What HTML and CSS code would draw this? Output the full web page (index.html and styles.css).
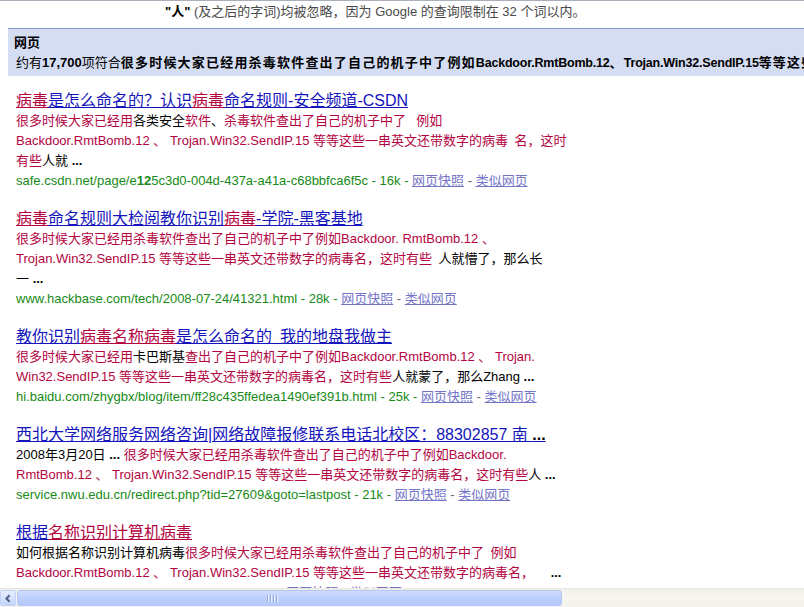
FILE: index.html
```html
<!DOCTYPE html>
<html lang="zh-CN">
<head>
<meta charset="utf-8">
<title>Google 搜索结果</title>
<link rel="stylesheet" href="styles.css">
</head>
<body>
<div class="viewport">
  <div class="notice"><b>&quot;人&quot;</b> (及之后的字词)均被忽略，因为 Google 的查询限制在 32 个词以内。</div>
  <div class="bar">
    <div class="bar-title">网页</div>
    <div class="bar-count">约有<b class="num">17,700</b>项符合<b class="q">很多时候大家已经用杀毒软件查出了自己的机子中了例如<span class="en">Backdoor.RmtBomb.12</span>、<span class="en">Trojan.Win32.SendIP.15</span>等等这些一串英文还带数字的病毒名，这时有些人</b>的查询结果</div>
  </div>
  <div class="results">
    <div class="result">
      <a class="title" href="#"><span class="hl">病毒</span>是怎么命名的？认识<span class="hl">病毒</span>命名规则-安全频道-CSDN</a>
      <div class="snip"><span class="hl">很多时候大家已经用</span>各类安全<span class="hl">软件</span>、<span class="hl">杀毒软件查出了自己的机子中了</span>&ensp; <span class="hl">例如</span><br><span class="hl">Backdoor.RmtBomb.12 、 Trojan.Win32.SendIP.15 等等这些一串英文还带数字的病毒&ensp;名，这时</span><br><span class="hl">有些</span>人就 <b>...</b></div>
      <div class="url"><span class="g">safe.csdn.net/page/e<b>12</b>5c3d0-004d-437a-a41a-c68bbfca6f5c - 16k - </span><a class="gl" href="#">网页快照</a> - <a class="gl" href="#">类似网页</a></div>
    </div>
    <div class="result">
      <a class="title" href="#"><span class="hl">病毒</span>命名规则大检阅教你识别<span class="hl">病毒</span>-学院-黑客基地</a>
      <div class="snip"><span class="hl">很多时候大家已经用杀毒软件查出了自己的机子中了例如Backdoor. RmtBomb.12 、</span><br><span class="hl">Trojan.Win32.SendIP.15 等等这些一串英文还带数字的病毒名，这时有些</span>&ensp;人就懵了，那么长<br>一 <b>...</b></div>
      <div class="url"><span class="g">www.hackbase.com/tech/2008-07-24/41321.html - 28k - </span><a class="gl" href="#">网页快照</a> - <a class="gl" href="#">类似网页</a></div>
    </div>
    <div class="result">
      <a class="title" href="#">教你识别<span class="hl">病毒名称病毒</span>是怎么命名的&ensp;我的地盘我做主</a>
      <div class="snip"><span class="hl">很多时候大家已经用</span>卡巴斯基<span class="hl">查出了自己的机子中了例如Backdoor.RmtBomb.12 、 Trojan.</span><br><span class="hl">Win32.SendIP.15 等等这些一串英文还带数字的病毒名，这时有些</span>人就蒙了，那么Zhang <b>...</b></div>
      <div class="url"><span class="g">hi.baidu.com/zhygbx/blog/item/ff28c435ffedea1490ef391b.html - 25k - </span><a class="gl" href="#">网页快照</a> - <a class="gl" href="#">类似网页</a></div>
    </div>
    <div class="result">
      <a class="title" href="#">西北大学网络服务网络咨询|网络故障报修联系电话北校区：88302857 南 <b>...</b></a>
      <div class="snip">2008年3月20日 <b>...</b> <span class="hl">很多时候大家已经用杀毒软件查出了自己的机子中了例如Backdoor.</span><br><span class="hl">RmtBomb.12 、 Trojan.Win32.SendIP.15 等等这些一串英文还带数字的病毒名，这时有些</span>人 <b>...</b></div>
      <div class="url"><span class="g">service.nwu.edu.cn/redirect.php?tid=27609&amp;goto=lastpost - 21k - </span><a class="gl" href="#">网页快照</a> - <a class="gl" href="#">类似网页</a></div>
    </div>
    <div class="result">
      <a class="title" href="#">根据<span class="hl">名称识别计算机病毒</span></a>
      <div class="snip">如何根据名称识别计算机病毒<span class="hl">很多时候大家已经用杀毒软件查出了自己的机子中了&ensp;例如</span><br><span class="hl">Backdoor.RmtBomb.12 、 Trojan.Win32.SendIP.15 等等这些一串英文还带数字的病毒名，</span>&emsp; <b>...</b></div>
      <div class="url"><span class="g">www.jsjbdz.com/article/virus/name.html - 18k - </span><a class="gl" href="#">网页快照</a> - <a class="gl" href="#">类似网页</a></div>
    </div>
  </div>
</div>
<div class="hscroll">
  <div class="sb-btn"><svg width="8" height="9" viewBox="0 0 8 9"><path d="M5.6 1.2 L2.4 4.5 L5.6 7.8" fill="none" stroke="#4d6185" stroke-width="2"/></svg></div>
  <div class="sb-thumb"><span class="grip"><i></i><i></i><i></i><i></i></span></div>
  <div class="sb-track"></div>
</div>
</body>
</html>
```

FILE: styles.css
```css
* { box-sizing: border-box; }
html, body { margin: 0; padding: 0; background: #fff; }
body {
  width: 804px;
  height: 607px;
  overflow: hidden;
  font-family: "Liberation Sans", "Noto Sans CJK SC", sans-serif;
  font-size: 13px;
  color: #000;
}
.viewport { height: 588px; overflow: hidden; }

.notice {
  height: 28px;
  border-top: 1px solid #a9afbb;
  padding-left: 165px;
  line-height: 22px;
  color: #4a4a4a;
  white-space: nowrap;
}
.notice b { color: #000; }

.bar {
  margin-left: 8px;
  background: #d5ddf3;
  border-top: 1px solid #7f9ad4;
  padding: 4px 0 3px 6px;
  white-space: nowrap;
  overflow: hidden;
}
.bar-title { font-weight: bold; line-height: 20px; }
.bar-count { line-height: 20px; padding-left: 2px; }
.bar-count .q { letter-spacing: 1.2px; }
.bar-count .en { font-size: 12.5px; letter-spacing: -0.2px; }

.results { padding: 15px 0 0 16px; }
.result { margin-bottom: 18px; white-space: nowrap; }

.title {
  display: inline-block;
  font-size: 16px;
  line-height: 20px;
  color: #1414bc;
  text-decoration: underline;
}
.title .hl { text-decoration: underline; }
.title b { color: #000; }

.hl { color: #b3043f; }
.snip { line-height: 20px; color: #000; }
.snip b { font-weight: bold; }

.url { line-height: 20px; color: #666; }
.url .g { color: #178a17; }
.gl { color: #7474c8; text-decoration: underline; }

.hscroll {
  height: 19px;
  display: flex;
  align-items: stretch;
  background: linear-gradient(#f0efe9, #f6f5f0 40%, #f3f2ec);
  border-top: 1px solid #e9e8e1;
  padding: 1px 0;
}
.sb-btn {
  width: 16px;
  border: 1px solid #c2d1f6;
  border-radius: 2px;
  background: linear-gradient(#e6edfe, #c5d5fb);
  display: flex;
  align-items: center;
  justify-content: center;
}
.sb-thumb {
  width: 545px;
  margin-left: 1px;
  border: 1px solid #b4c6f3;
  border-radius: 3px;
  background: linear-gradient(#d0dcfd, #bccefb 55%, #b5c8f8);
  display: flex;
  align-items: center;
  padding-left: 249px;
}
.grip { display: flex; gap: 1px; }
.grip i {
  display: block;
  width: 1px;
  height: 7px;
  background: #8fa9e6;
  box-shadow: 1px 0 0 #eef3ff;
  margin-right: 1px;
}
.sb-track { flex: 1; }
```
